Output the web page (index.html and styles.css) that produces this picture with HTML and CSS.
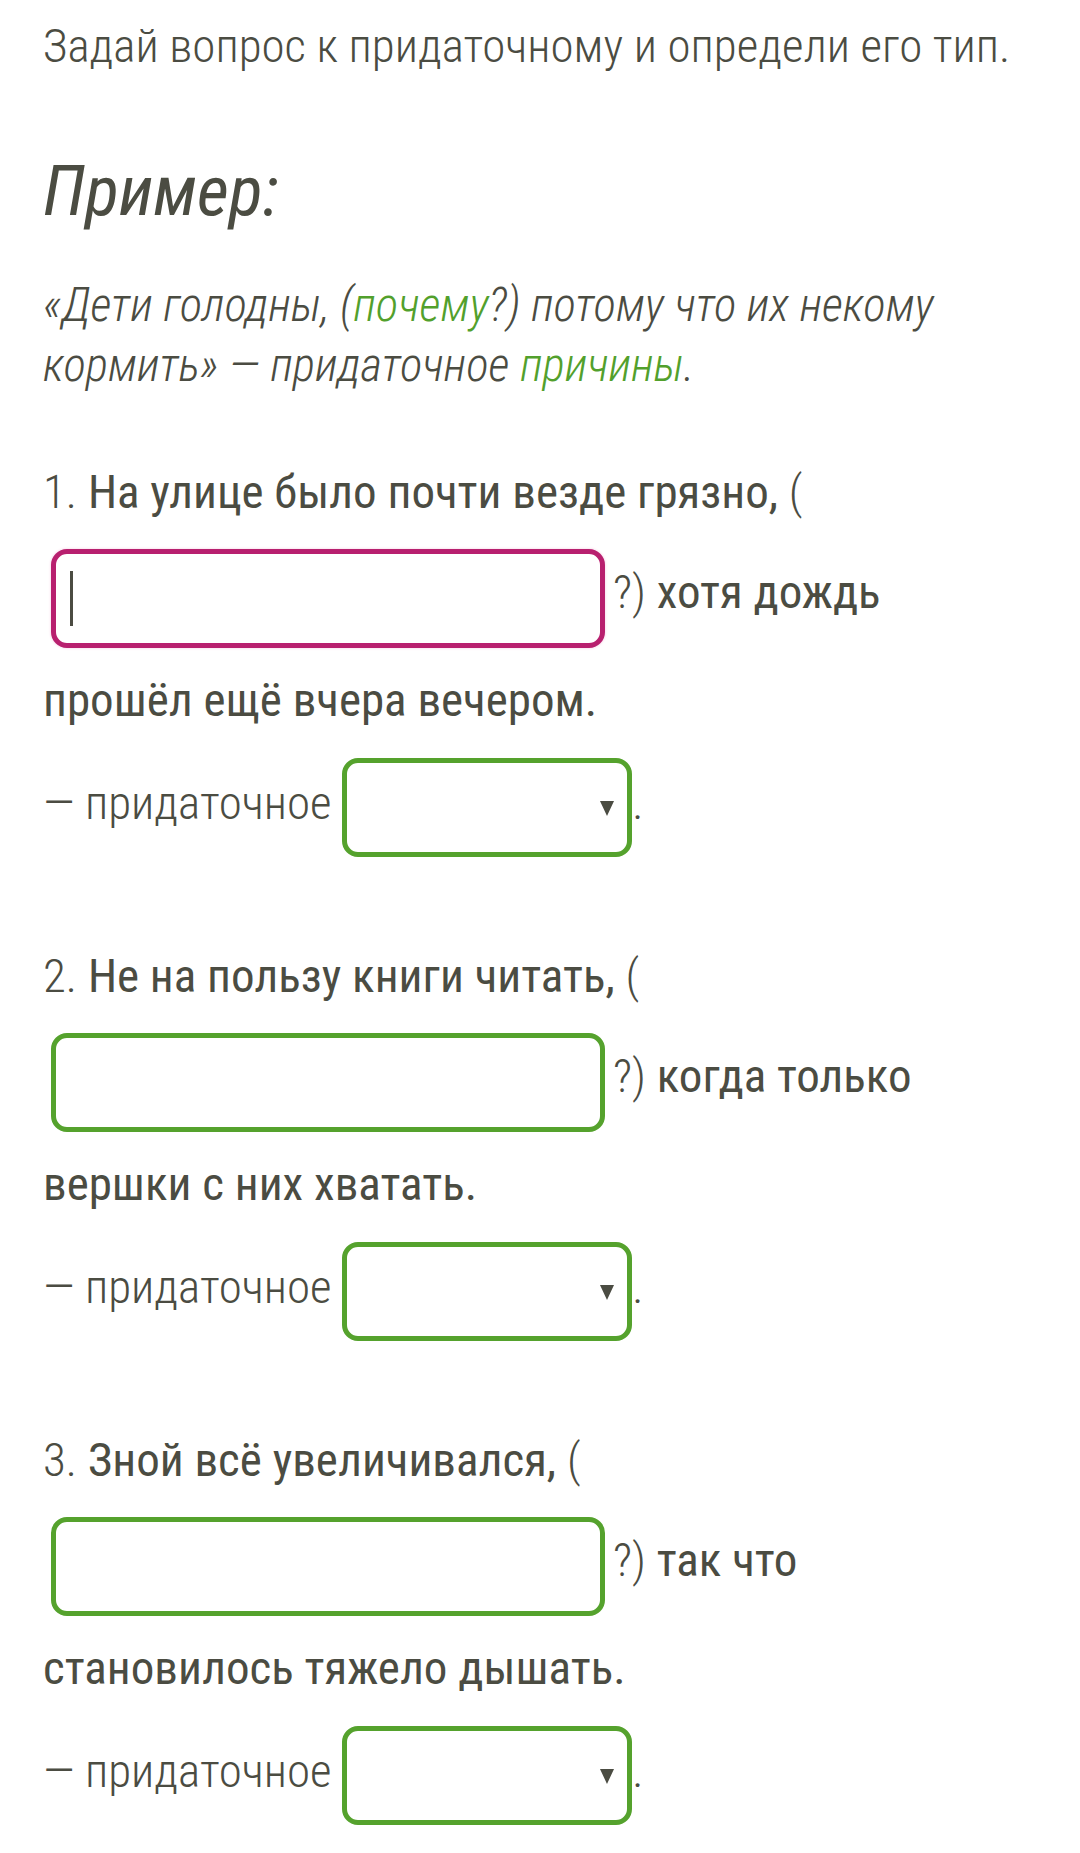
FILE: index.html
```html
<!DOCTYPE html>
<html lang="ru">
<head>
    <meta charset="UTF-8">
    <title>Придаточные предложения</title>
    <link rel="stylesheet" href="styles.css">
</head>
<body>
    <div class="page">
        <!-- задание -->
        <p class="task">Задай вопрос к придаточному и определи его тип.</p>

        <h2 class="sample-title">Пример:</h2>
        <p class="sample">«Дети голодны, (<span class="green">почему</span>?) потому что их некому кормить» — придаточное <span class="green">причины</span>.</p>

        <!-- 1 -->
        <div class="question">
            <p class="sentence"><span class="thin">1.</span> На улице было почти везде грязно, <span class="thin">(</span><input class="answer focused" type="text"><span class="thin">?)</span> хотя дождь прошёл ещё вчера вечером.</p>
            <p class="kind">— придаточное <span class="pick"><select class="kind-select"><option></option></select></span>.</p>
        </div>

        <!-- 2 -->
        <div class="question">
            <p class="sentence"><span class="thin">2.</span> Не на пользу книги читать, <span class="thin">(</span><input class="answer" type="text"><span class="thin">?)</span> когда только вершки с них хватать.</p>
            <p class="kind">— придаточное <span class="pick"><select class="kind-select"><option></option></select></span>.</p>
        </div>

        <!-- 3 -->
        <div class="question">
            <p class="sentence"><span class="thin">3.</span> Зной всё увеличивался, <span class="thin">(</span><input class="answer" type="text"><span class="thin">?)</span> так что становилось тяжело дышать.</p>
            <p class="kind">— придаточное <span class="pick"><select class="kind-select"><option></option></select></span>.</p>
        </div>
    </div>
</body>
</html>
```

FILE: styles.css
```css
/* общие настройки */
body { margin: 0; background: #fff; color: #4b4c42; font-family: Roboto, "Liberation Sans", sans-serif; font-stretch: 80%; }
.page { padding: 16px 43px 0 43px; }
p { margin: 0; }

.task { font-size: 47px; font-weight: 300; line-height: 60px; margin-bottom: 73px; }

/* пример */
.sample-title { font-size: 70px; font-style: italic; font-weight: 400; line-height: 84px; margin: 0 0 42px 0; }
.sample { font-size: 47px; font-style: italic; font-weight: 300; line-height: 60px; margin-bottom: 67px; }
.green { color: #52a02c; }

/* вопросы */
.question { margin-bottom: 63px; }
.sentence { font-size: 47px; font-weight: 400; line-height: 60px; }
.thin { font-weight: 300; }
.kind { font-size: 47px; font-weight: 300; line-height: 60px; }

.answer {
    box-sizing: border-box;
    width: 554px; height: 99px;
    margin: 27px 8px 22px 8px;
    border: 5px solid #55a22d; border-radius: 16px;
    background: #fff;
    vertical-align: middle;
    outline: none;
    font: inherit;
}
.answer.focused {
    border-color: #b8206f;
    box-shadow: 0 0 3px #f6c8e2;
    /* курсор в поле */
    background: #fff linear-gradient(#4b4c42, #4b4c42) no-repeat 14px center / 3px 55px;
}

.pick { position: relative; display: inline-block; vertical-align: middle; margin: 28px 0 26px 0; }
.kind-select {
    box-sizing: border-box;
    display: block;
    width: 290px; height: 99px;
    border: 5px solid #55a22d; border-radius: 16px;
    background: #fff;
    -webkit-appearance: none; appearance: none;
    outline: none;
}
.pick::after {
    content: "";
    position: absolute; right: 18px; top: 43px;
    border-left: 7px solid transparent; border-right: 7px solid transparent;
    border-top: 15px solid #4b4c42;
}
```
